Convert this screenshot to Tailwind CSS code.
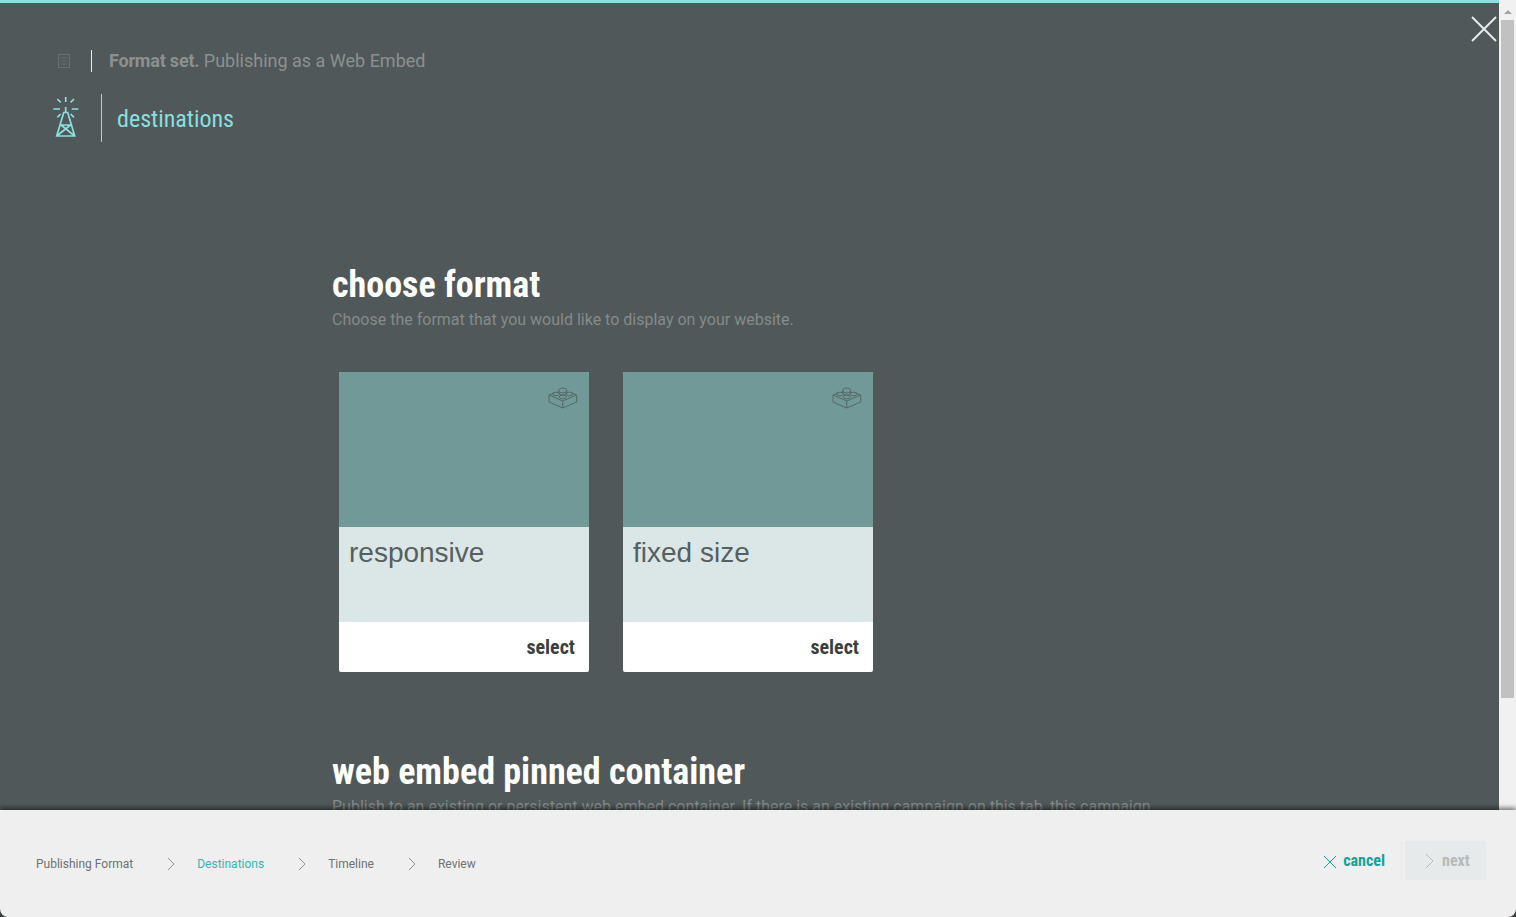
<!DOCTYPE html>
<html><head><meta charset="utf-8"><title>destinations</title>
<script src="https://cdn.jsdelivr.net/npm/@tailwindcss/browser@4"></script></head>
<body class="m-0 overflow-hidden bg-white">
<div class="w-[1516px] h-[917px] flex flex-col overflow-hidden font-['Roboto',sans-serif] bg-[#3d4242]">
  <div class="h-[810px] flex relative">
    <main class="w-[1499px] h-[810px] overflow-hidden bg-[#505859] border-t-[3px] border-[#8adfdf] relative">
      <div class="flex items-center h-[24px] mt-[46px] ml-[56px]">
        <svg class="w-[16px] h-[16px] text-[#6b7171]" viewBox="0 0 16 16" fill="none" stroke="currentColor" stroke-width="1"><rect x="2.5" y="1.5" width="11" height="13"/><path d="M4.5 5h7M4.5 8h7M4.5 11h7"/></svg>
        <div class="w-px h-[22px] bg-[#e8eded] ml-[19px] mr-[17px]"></div>
        <p class="text-[18px] leading-[24px] text-[#8c9190] whitespace-nowrap"><b class="font-bold tracking-[-0.2px]">Format set.</b> Publishing as a Web Embed</p>
      </div>
      <div class="flex items-center h-[48px] mt-[21px] ml-[52px]">
        <svg class="w-[28px] h-[44px] text-[#8adfdf]" viewBox="0 0 28 44" fill="none" stroke="currentColor" stroke-width="1.7"><path d="M13.7 1v5M5.3 3l3.4 3.3M22 3l-3.4 3.3M1.3 13H8M19.7 13h6.6M5.3 21.3L8.7 18M22 21.3L18.6 18M13.7 11v5"/><path d="M11.8 16.5L4.7 40h18l-7-23.5zM9 29h9.5M9 29l13.7 11M18.5 29L4.7 40"/></svg>
        <div class="w-px h-[48px] bg-[#8adfdf] ml-[21px] mr-[15px]"></div>
        <h2 class="text-[24px] leading-[48px] font-[450] text-[#8adfdf] font-stretch-condensed whitespace-nowrap relative top-[1px]">destinations</h2>
      </div>
      <section class="ml-[332px] mt-[121px]">
        <h1 class="text-[36px] leading-[44px] font-bold text-white font-stretch-condensed whitespace-nowrap">choose format</h1>
        <p class="text-[16px] leading-[24px] text-[#858b8a] mt-[1px] whitespace-nowrap">Choose the format that you would like to display on your website.</p>
        <div class="flex gap-[34px] ml-[7px] mt-[40px]">
          <article class="w-[250px] h-[300px] rounded-[2px] overflow-hidden flex flex-col bg-white">
            <div class="h-[155px] bg-[#709998] flex justify-end pt-[14px] pr-[11px]">
              <svg class="w-[30px] h-[24px] text-[#566869]" viewBox="0 0 30 24" fill="none" stroke="currentColor" stroke-width="1"><path d="M1 9l13.7 6 14-6v7l-14 6L1 16zM14.7 15v7M1 9l6-2.5M28.7 9l-6-2.5"/><ellipse cx="14.7" cy="4.5" rx="4" ry="2.5"/><path d="M10.7 4.5V7c0 1.2 1.8 2 4 2s4-.8 4-2V4.5"/><ellipse cx="8" cy="8" rx="3.5" ry="1.8"/><ellipse cx="21.5" cy="8" rx="3.5" ry="1.8"/><ellipse cx="14.7" cy="11" rx="3.5" ry="1.8"/></svg>
            </div>
            <div class="h-[95px] bg-[#dbe7e7] px-[10px] pt-[9px] text-[28px] leading-[34px] text-[#566060] font-['Liberation_Sans',sans-serif]">responsive</div>
            <div class="h-[50px] flex items-center justify-end pr-[14px] text-[20px] font-bold text-[#3a3f3f] font-stretch-condensed">select</div>
          </article>
          <article class="w-[250px] h-[300px] rounded-[2px] overflow-hidden flex flex-col bg-white">
            <div class="h-[155px] bg-[#709998] flex justify-end pt-[14px] pr-[11px]">
              <svg class="w-[30px] h-[24px] text-[#566869]" viewBox="0 0 30 24" fill="none" stroke="currentColor" stroke-width="1"><path d="M1 9l13.7 6 14-6v7l-14 6L1 16zM14.7 15v7M1 9l6-2.5M28.7 9l-6-2.5"/><ellipse cx="14.7" cy="4.5" rx="4" ry="2.5"/><path d="M10.7 4.5V7c0 1.2 1.8 2 4 2s4-.8 4-2V4.5"/><ellipse cx="8" cy="8" rx="3.5" ry="1.8"/><ellipse cx="21.5" cy="8" rx="3.5" ry="1.8"/><ellipse cx="14.7" cy="11" rx="3.5" ry="1.8"/></svg>
            </div>
            <div class="h-[95px] bg-[#dbe7e7] px-[10px] pt-[9px] text-[28px] leading-[34px] text-[#566060] font-['Liberation_Sans',sans-serif]">fixed size</div>
            <div class="h-[50px] flex items-center justify-end pr-[14px] text-[20px] font-bold text-[#3a3f3f] font-stretch-condensed">select</div>
          </article>
        </div>
        <h1 class="text-[36px] leading-[44px] font-bold text-white font-stretch-condensed whitespace-nowrap mt-[78px]">web embed pinned container</h1>
        <p class="text-[16px] leading-[24px] text-[#858b8a] mt-[1px] whitespace-nowrap">Publish to an existing or persistent web embed container. If there is an existing campaign on this tab, this campaign</p>
      </section>
      <button class="absolute top-[12px] right-[1px] w-[28px] h-[28px] text-[#e6ebeb]" aria-label="close"><svg viewBox="0 0 28 28" fill="none" stroke="currentColor" stroke-width="2"><path d="M2 2l24 24M26 2L2 26"/></svg></button>
    </main>
    <div class="w-[17px] h-[810px] bg-[#f1f1f1] flex flex-col items-center">
      <div class="h-[20px] w-full flex items-center justify-center pt-[4px]"><div class="w-0 h-0 border-x-[4px] border-x-transparent border-b-[4px] border-b-[#a3a3a3]"></div></div>
      <div class="w-[13px] h-[678px] bg-[#c1c1c1]"></div>
    </div>
  </div>
  <footer class="relative z-10 h-[107px] bg-[#efefef] rounded-b-[8px] shadow-[0_-2px_5px_rgba(0,0,0,0.55)] flex items-center justify-between pl-[36px] pr-[30px]">
    <nav class="flex items-center text-[12px] leading-[14px] text-[#6e7271] mt-[1px]">
      <span>Publishing Format</span>
      <svg class="w-[8px] h-[14px] ml-[34px] mr-[22px] text-[#8f9393]" viewBox="0 0 8 14" fill="none" stroke="currentColor"><path d="M1 1l6 6-6 6"/></svg>
      <span class="text-[#36b5ae]">Destinations</span>
      <svg class="w-[8px] h-[14px] ml-[34px] mr-[22px] text-[#8f9393]" viewBox="0 0 8 14" fill="none" stroke="currentColor"><path d="M1 1l6 6-6 6"/></svg>
      <span>Timeline</span>
      <svg class="w-[8px] h-[14px] ml-[34px] mr-[22px] text-[#8f9393]" viewBox="0 0 8 14" fill="none" stroke="currentColor"><path d="M1 1l6 6-6 6"/></svg>
      <span>Review</span>
    </nav>
    <div class="flex items-center -mt-[6px]">
      <div class="flex items-center gap-[6px] text-[#16a29b] text-[16px] font-bold font-stretch-condensed mr-[16px]">
        <svg class="w-[14px] h-[14px] mt-[2px]" viewBox="0 0 14 14" fill="none" stroke="currentColor" stroke-width="1"><path d="M1 1l12 12M13 1L1 13"/></svg>
        <span>cancel</span>
      </div>
      <div class="w-px h-[39px] bg-[#e6e8e8] mr-[3px]"></div>
      <div class="w-[81px] h-[39px] bg-[#e6eaea] rounded-[2px] flex items-center pl-[20px] gap-[8px] text-[#b7bbbb] text-[16px] font-bold font-stretch-condensed">
        <svg class="w-[9px] h-[16px] mt-[1px]" viewBox="0 0 9 16" fill="none" stroke="currentColor"><path d="M1 1l7 7-7 7"/></svg>
        <span>next</span>
      </div>
    </div>
  </footer>
</div>
</body></html>
